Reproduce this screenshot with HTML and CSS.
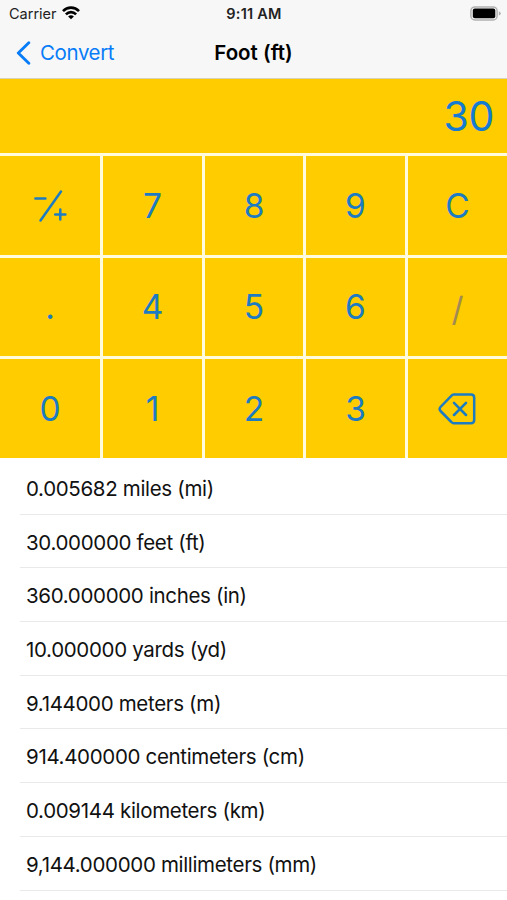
FILE: index.html
```html
<!DOCTYPE html>
<html lang="en">
<head>
<meta charset="utf-8">
<title>Foot (ft)</title>
<link rel="stylesheet" href="styles.css">
</head>
<body>
<header class="top">
  <div class="status">
    <div class="carrier"><span>Carrier</span>
      <svg class="wifi" width="18" height="14" viewBox="0 0 18 14" fill="none" stroke="#000" stroke-width="2.6"><path d="M1 5.100C5.400.5 12.600.5 17 5.100M3.900 8.300c2.900-2.900 7.300-2.900 10.200 0"/><path d="M6.100 10.400c1.700-1.600 4.100-1.600 5.800 0L9 13.300z" fill="#000" stroke="none"/></svg>
    </div>
    <div class="clock">9:11 AM</div>
    <div class="power">
      <svg width="32" height="15" viewBox="0 0 32 15"><rect x=".9" y=".9" width="26.200" height="13" rx="4" fill="none" stroke="#b1b1b1" stroke-width="1.500"/><rect x="2.800" y="2.600" width="22.500" height="9.600" rx="2" fill="#000"/><path d="M28.800 5.200q2 .8 2 2.200t-2 2.200z" fill="#b1b1b1"/></svg>
    </div>
  </div>
  <nav class="nav">
    <a class="back"><svg width="16" height="24" viewBox="0 0 16 24" fill="none" stroke="#087cf7" stroke-width="2.900" stroke-linecap="round" stroke-linejoin="round"><path d="M13.800 1.800 3.300 12l10.500 10.200"/></svg><span>Convert</span></a>
    <h1 class="title">Foot (ft)</h1>
  </nav>
</header>
<main>
  <div class="display">30</div>
  <div class="keys">
    <button class="key key-icon" aria-label="plus minus"><svg width="34" height="34" viewBox="0 0 34 34" fill="none" stroke="#1c7bc1" stroke-width="2.500" stroke-linecap="round"><path d="M2.400 9.500h10M28 2.500 7.500 31.500M22.200 25.500h10.200M27.300 20.500v10"/></svg></button>
    <button class="key">7</button><button class="key">8</button><button class="key">9</button><button class="key">C</button>
    <button class="key">.</button><button class="key">4</button><button class="key">5</button><button class="key">6</button><button class="key key-off">/</button>
    <button class="key">0</button><button class="key">1</button><button class="key">2</button><button class="key">3</button>
    <button class="key key-icon key-delete" aria-label="delete"><svg width="38" height="32" viewBox="0 0 38 32" fill="none" stroke="#1c7bc1" stroke-width="2.500" stroke-linecap="round" stroke-linejoin="round"><path d="M15.800 1.600H33Q36.200 1.600 36.200 4.800V27Q36.200 30.200 33 30.200H15.800Q14.400 30.200 13.300 29L2.500 18Q.8 16 2.500 14L13.300 2.800Q14.400 1.600 15.800 1.600zM16 9.800 28 22M28 9.800 16 22"/></svg></button>
  </div>
  <ul class="list">
    <li>0.005682 miles (mi)</li>
    <li>30.000000 feet (ft)</li>
    <li>360.000000 inches (in)</li>
    <li>10.000000 yards (yd)</li>
    <li>9.144000 meters (m)</li>
    <li>914.400000 centimeters (cm)</li>
    <li>0.009144 kilometers (km)</li>
    <li>9,144.000000 millimeters (mm)</li>
  </ul>
</main>
</body>
</html>
```
FILE: styles.css
```css
* { box-sizing: border-box; }
body { margin: 0; height: 900px; overflow: hidden; background: #fff; color: #111; font-family: Inter, "Liberation Sans", sans-serif; }
svg { display: block; }
.top { height: 79px; background: #f7f7f7; border-bottom: 1px solid #d9d2b8; }
.status { display: grid; grid-template-columns: 1fr auto 1fr; align-items: center; height: 27px; padding: 0 5px 0 9px; font-size: 14.5px; }
.carrier { display: flex; align-items: center; gap: 5px; color: #222; }
.wifi { margin-top: -2px; }
.clock { margin-right: 3px; font-weight: 600; font-size: 14.5px; letter-spacing: .25px; color: #222; }
.power { display: flex; justify-content: flex-end; }
.nav { display: grid; grid-template-columns: 1fr auto 1fr; align-items: center; height: 51px; padding: 0 15px; }
.back { display: flex; align-items: center; gap: 9px; color: #087cf7; font-size: 20.5px; letter-spacing: -.4px; }
.title { margin: 0; font-size: 20.5px; font-weight: 600; color: #000; }
.display { height: 74px; padding-right: 13px; background: #fc0; color: #147bd0; font-size: 41px; line-height: 75px; letter-spacing: -.3px; text-align: right; }
.keys { display: grid; grid-template-columns: 100px 99px 98px 99px 99px; grid-template-rows: 99px 98px 99px; gap: 3px; padding-top: 3px; background: #fffbdc; }
.key { display: flex; align-items: center; justify-content: center; padding: 2px 0 0; border: 0; background: #fc0; color: #1c7bc1; font: 33.500px/1 Inter, "Liberation Sans", sans-serif; }
.key-icon { padding: 0; }
.key-delete { padding-right: 1px; }
.key-off { padding-top: 5px; color: #a28b52; }
.list { margin: 0; padding: 3px 0 0 20px; list-style: none; }
.list li { display: flex; align-items: center; height: 53.700px; padding: 2px 0 0 6px; border-bottom: 1px solid #e9e9ea; font-size: 20.500px; letter-spacing: -.33px; }
```
